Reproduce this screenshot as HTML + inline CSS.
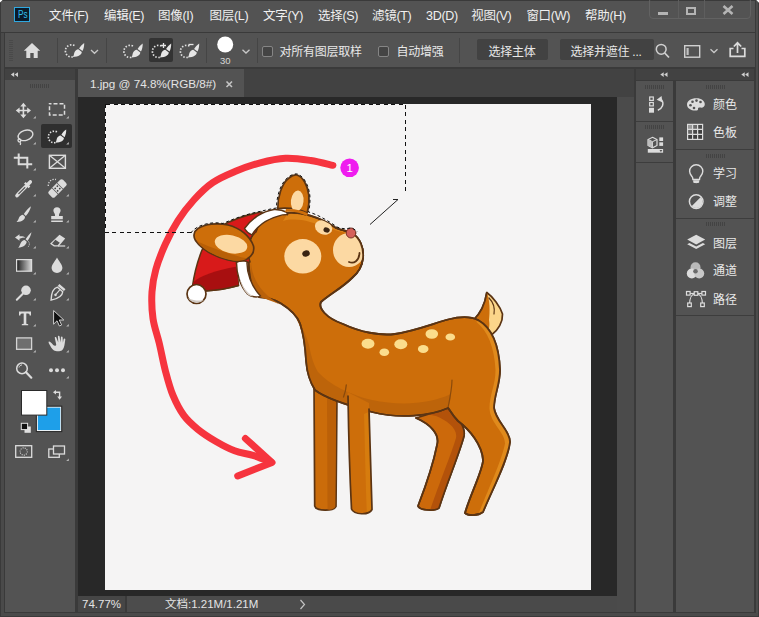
<!DOCTYPE html>
<html><head><meta charset="utf-8">
<style>
html,body{margin:0;padding:0;}
body{width:759px;height:617px;overflow:hidden;background:#535353;position:relative;font-family:"Liberation Sans","Noto Sans CJK SC",sans-serif;color:#e6e6e6;}
.abs{position:absolute;}
.menu{position:absolute;top:1px;height:31px;line-height:31px;font-size:12.5px;color:#f0f0f0;white-space:nowrap;letter-spacing:-0.3px;}
.ob{top:42.600px;font-size:12px;line-height:18px;letter-spacing:-0.25px;color:#f0f0f0;}
.grip{width:19px;height:4px;background:repeating-linear-gradient(90deg,#434343 0 1px,#535353 1px 2px);}
.pl{left:713px;font-size:12px;line-height:18px;color:#f0f0f0;}
.txt{position:absolute;white-space:nowrap;color:#e8e8e8;}
</style></head><body>
<!-- frame -->
<div class="abs" style="left:0;top:0;width:759px;height:617px;background:#3a3a3a;"></div>
<div class="abs" style="left:1px;top:1px;width:754px;height:30.700px;background:#535353;"></div>
<div class="abs" style="left:1px;top:33px;width:3px;height:583px;background:#4a4a4a;"></div>
<div class="abs" style="left:5px;top:33px;width:750px;height:34px;background:#535353;"></div>
<!-- TITLE BAR -->
<div class="abs" style="left:14px;top:7px;width:16px;height:15px;background:#0a1b2a;border:1px solid #2fa8e0;box-sizing:border-box;"></div>
<div class="txt" style="left:16px;top:7.500px;font-size:10.300px;line-height:14px;color:#31c0f0;letter-spacing:0;transform:scaleX(0.800);transform-origin:0 0;left:17.500px">Ps</div>
<div class="menu" id="m1" style="left:49px;">文件(F)</div>
<div class="menu" id="m2" style="left:104px;">编辑(E)</div>
<div class="menu" id="m3" style="left:158px;">图像(I)</div>
<div class="menu" id="m4" style="left:209.500px;">图层(L)</div>
<div class="menu" id="m5" style="left:263px;">文字(Y)</div>
<div class="menu" id="m6" style="left:318px;">选择(S)</div>
<div class="menu" id="m7" style="left:372px;">滤镜(T)</div>
<div class="menu" id="m8" style="left:426px;">3D(D)</div>
<div class="menu" id="m9" style="left:471.300px;">视图(V)</div>
<div class="menu" id="m10" style="left:526.400px;">窗口(W)</div>
<div class="menu" id="m11" style="left:585px;">帮助(H)</div>
<!-- window controls -->
<div class="abs" style="left:649px;top:-3px;width:102px;height:22px;border:1px solid #626262;border-radius:4px;box-sizing:border-box;"></div>
<div class="abs" style="left:678px;top:0;width:1px;height:18px;background:#5e5e5e;"></div>
<div class="abs" style="left:704px;top:0;width:1px;height:18px;background:#5e5e5e;"></div>
<div class="abs" style="left:658px;top:11.500px;width:10px;height:3px;background:#b4b4b4;"></div>
<div class="abs" style="left:686px;top:7px;width:10px;height:8px;border:2px solid #b4b4b4;box-sizing:border-box;"></div>
<svg class="abs" style="left:721px;top:4px" width="14" height="12" viewBox="0 0 14 12"><path d="M2.500,2 L11.500,10 M11.500,2 L2.500,10" stroke="#b4b4b4" stroke-width="2.600" fill="none"/></svg>
<!-- OPTIONS BAR -->
<div class="abs" style="left:9px;top:40px;width:4px;height:21px;background:repeating-linear-gradient(#494949 0 1px,#535353 1px 2px);"></div>
<svg class="abs" style="left:23px;top:42px" width="18" height="17" viewBox="0 0 18 17"><path d="M9,1 L0.800,8.800 H3.300 V16 H7.300 V11 H10.700 V16 H14.700 V8.800 H17.200 Z" fill="#dcdcdc"/></svg>
<div class="abs" style="left:57px;top:38px;width:1px;height:25px;background:#454545;"></div>
<div class="abs" style="left:106px;top:38px;width:1px;height:25px;background:#454545;"></div>
<div class="abs" style="left:206px;top:38px;width:1px;height:25px;background:#454545;"></div>
<div class="abs" style="left:257px;top:38px;width:1px;height:25px;background:#454545;"></div>
<div class="abs" style="left:459px;top:38px;width:1px;height:25px;background:#454545;"></div>
<div class="abs" style="left:149px;top:38px;width:24px;height:24px;background:#333333;border-radius:2px;"></div>
<svg class="abs" style="left:0;top:0" width="759" height="70" viewBox="0 0 759 70">
<defs>
<g id="qsel">
<path d="M8.27,14.37 A6.1,6.1 0 1 1 10.92,3.73" fill="none" stroke="#e2e2e2" stroke-width="1.700" stroke-dasharray="1.500 1.600"/>
<path d="M19.700,0.600 C17.600,2 15.800,4 14.600,6 L18,8.600 C19.200,6.300 19.800,3.300 19.700,0.600 Z M13.800,6.800 L17.300,9.500 C17.300,11.800 14.500,14.400 8.200,14.500 C9.500,13.200 9.300,11.700 9.900,10 C10.600,8.200 12.200,7 13.800,6.800 Z" fill="#e6e6e6"/>
</g>
<path id="chev" d="M0.500,0.700 L4,4 L7.500,0.700" fill="none" stroke="#c8c8c8" stroke-width="1.300"/>
</defs>
<use href="#qsel" x="64.500" y="42.500"/>
<use href="#chev" x="90.500" y="49.300"/>
<use href="#qsel" x="123" y="43"/>
<use href="#qsel" x="151.500" y="43"/>
<path d="M163.500,43 V48 M161,45.500 H166" stroke="#e6e6e6" stroke-width="1.300" fill="none"/>
<use href="#qsel" x="179.500" y="43"/>
<path d="M188.500,44.500 H193.500" stroke="#e6e6e6" stroke-width="1.300" fill="none"/>
<circle cx="225.200" cy="44.500" r="8" fill="#ffffff"/>
<use href="#chev" x="242" y="49"/>
<!-- search -->
<circle cx="661.200" cy="49.300" r="4.900" fill="none" stroke="#d0d0d0" stroke-width="1.500"/>
<path d="M664.700,53 L669,57.500" stroke="#d0d0d0" stroke-width="1.800" fill="none"/>
<!-- workspace -->
<rect x="684.700" y="45.700" width="15" height="11.500" fill="none" stroke="#d0d0d0" stroke-width="1.400"/>
<rect x="686.500" y="48" width="2.200" height="7" fill="#c0c0c0"/>
<use href="#chev" x="710" y="48.500"/>
<!-- share -->
<path d="M733.500,48.500 H730.200 V56.300 H744.800 V48.500 H741.500" fill="none" stroke="#dcdcdc" stroke-width="1.700"/>
<path d="M737.500,53 V44 M733.800,46.500 L737.500,42.800 L741.200,46.500" fill="none" stroke="#dcdcdc" stroke-width="1.700"/>
</svg>
<div class="txt" style="left:220px;top:56px;font-size:9.500px;line-height:10px;color:#d8d8d8;">30</div>
<div class="abs" style="left:262px;top:46px;width:11px;height:11px;border:1px solid #858585;border-radius:2px;box-sizing:border-box;background:#444444;"></div>
<div class="txt ob" id="o1" style="left:279.500px;">对所有图层取样</div>
<div class="abs" style="left:378px;top:46px;width:11px;height:11px;border:1px solid #858585;border-radius:2px;box-sizing:border-box;background:#444444;"></div>
<div class="txt ob" id="o2" style="left:396.500px;">自动增强</div>
<div class="abs" style="left:477px;top:38.500px;width:71px;height:21.500px;background:#424242;border-radius:2px;"></div>
<div class="txt ob" id="o3" style="left:488.500px;">选择主体</div>
<div class="abs" style="left:560px;top:38.500px;width:94px;height:21.500px;background:#424242;border-radius:2px;"></div>
<div class="txt ob" id="o4" style="left:570.500px;">选择并遮住 ...</div>
<!-- left toolbar -->
<div class="abs" style="left:5px;top:69px;width:70px;height:11px;background:#424242;"></div>
<div class="abs" style="left:5px;top:80px;width:70px;height:532px;background:#535353;"></div>
<!-- TOOLBAR ICONS -->
<div class="abs" style="left:30px;top:84px;width:19px;height:4px;background:repeating-linear-gradient(90deg,#434343 0 1px,#535353 1px 2px);"></div>
<div class="abs" style="left:41px;top:124px;width:31px;height:24px;background:#2f2f2f;border-radius:2px;"></div>
<svg class="abs" style="left:0;top:0" width="80" height="617" viewBox="0 0 80 617">
<defs><path id="tri" d="M2.600,0 V2.600 H0 Z" fill="#b8b8b8"/></defs>
<g fill="#dcdcdc" stroke="none">
<path d="M14.200,72.300 L10.800,74.600 L14.200,76.900 Z M18,72.300 L14.600,74.600 L18,76.900 Z" fill="#cfcfcf"/>
<!-- move -->
<path d="M23.400,102.800 L20.300,106.600 H22.600 V109.700 H19.600 V107.400 L15.800,110.500 L19.600,113.600 V111.300 H22.600 V114.400 H20.300 L23.400,118.200 L26.500,114.400 H24.200 V111.300 H27.200 V113.600 L31,110.500 L27.200,107.400 V109.700 H24.200 V106.600 H26.500 Z"/>
<use href="#tri" x="33.200" y="116"/>
<use href="#tri" x="66.200" y="116"/>
<use href="#tri" x="33.200" y="142"/>
<use href="#tri" x="66.200" y="142"/>
<use href="#tri" x="33.200" y="168"/>
<use href="#tri" x="33.200" y="194"/>
<use href="#tri" x="66.200" y="194"/>
<use href="#tri" x="33.200" y="220"/>
<use href="#tri" x="66.200" y="220"/>
<use href="#tri" x="33.200" y="246"/>
<use href="#tri" x="66.200" y="246"/>
<use href="#tri" x="33.200" y="272"/>
<use href="#tri" x="66.200" y="272"/>
<use href="#tri" x="33.200" y="298"/>
<use href="#tri" x="66.200" y="298"/>
<use href="#tri" x="33.200" y="324"/>
<use href="#tri" x="66.200" y="324"/>
<use href="#tri" x="33.200" y="350"/>
<use href="#tri" x="66.200" y="350"/>
<use href="#tri" x="66.200" y="376"/>
<use href="#tri" x="66.200" y="458.500"/>
</g>
<g fill="none" stroke="#dcdcdc" stroke-width="1.500">
<!-- marquee -->
<rect x="49.500" y="103.800" width="15" height="11.200" stroke-dasharray="4 2" stroke-dashoffset="2"/>
<!-- lasso -->
<ellipse cx="25.500" cy="135.300" rx="7.600" ry="5" transform="rotate(-18 25.500 135.300)" stroke-width="1.400"/>
<path d="M19.300,138.500 C17.500,139 17.500,142 19.800,141.800 C21.300,141.500 21.300,139.300 19.300,138.500 M20,142 C20.800,143 20.800,144 20.200,145" stroke-width="1.300"/>
<!-- crop -->
<path d="M18.700,153.500 V164.200 H32.200 M13.800,157.700 H27.300 V168.400" stroke-width="2"/>
<!-- frame -->
<rect x="49.400" y="155.300" width="16" height="13" stroke-width="1.400"/>
<path d="M49.400,155.300 L65.400,168.300 M65.400,155.300 L49.400,168.300" stroke-width="1.300"/>
</g>
<!-- quick select (selected) -->
<g transform="translate(47.500,129) scale(0.95)"><use href="#qsel"/></g>
<!-- eyedropper -->
<path d="M29.500,180.300 C31.200,179.500 32.800,181.500 31.700,183 L29.300,185.500 L30.300,186.500 L28.600,188.200 L24,183.600 L25.700,181.900 L26.700,182.900 Z" fill="#dcdcdc"/>
<path d="M25.800,186.600 L18.600,193.800 L17,195.600" fill="none" stroke="#dcdcdc" stroke-width="3.600" stroke-linecap="round"/>
<path d="M24.800,187.600 L18.800,193.600" fill="none" stroke="#535353" stroke-width="1.300" stroke-linecap="round"/>
<!-- healing -->
<g transform="rotate(-45 57.500 188.500)">
<rect x="47.500" y="184.300" width="20" height="8.400" rx="2" fill="#dcdcdc"/>
<rect x="53.700" y="184.300" width="7.600" height="8.400" fill="#535353"/>
<rect x="54.400" y="184.300" width="6.200" height="8.400" fill="#dcdcdc"/>
<g fill="#444"><circle cx="56" cy="186.800" r="0.900"/><circle cx="59" cy="186.800" r="0.900"/><circle cx="56" cy="190.200" r="0.900"/><circle cx="59" cy="190.200" r="0.900"/></g>
</g>
<path d="M48.300,186 C48,181.500 52,178.500 56,179.500" fill="none" stroke="#dcdcdc" stroke-width="1.300" stroke-dasharray="1.300 1.400"/>
<!-- brush -->
<path d="M31,206.300 C28.500,208 25.500,211.500 23.800,214 L25.800,216 C28,213.800 30.500,209.500 31,206.300 Z M23,214.800 L25,216.800 C25,219.500 22,222.200 16.500,222 C18,221 18.300,219.500 19,217.800 C19.800,216 21.300,215 23,214.800 Z" fill="#dcdcdc"/>
<!-- stamp -->
<path d="M57,207.300 C59.300,207.300 60.600,209 60.600,210.600 C60.600,212.300 59.200,213.300 59,214.800 L59,216 H62.800 V219.300 H51.200 V216 H55 L55,214.800 C54.800,213.300 53.400,212.300 53.400,210.600 C53.400,209 54.700,207.300 57,207.300 Z M51.200,220.600 H62.800 V222 H51.200 Z" fill="#dcdcdc"/>
<!-- history brush -->
<path d="M31.500,232.300 C29.500,234 27,237 25.600,239.200 L27.500,241 C29.300,238.800 31,235.300 31.500,232.300 Z M24.800,240 L26.700,241.800 C26.500,244.500 23.500,247.500 18,247.800 C19.500,246.600 19.800,245 20.600,243.200 C21.400,241.300 23,240.200 24.800,240 Z" fill="#dcdcdc"/>
<path d="M15,237.500 L19.500,234.300 V236.300 C22,236 24,236.500 25.500,237.500 C23.500,237.500 21.500,238 19.500,238.700 V240.700 Z" fill="#dcdcdc"/>
<path d="M28.500,241.500 C30,243.500 29.500,246 27.500,247.500" fill="none" stroke="#dcdcdc" stroke-width="1" stroke-dasharray="1 1.200"/>
<!-- eraser -->
<path d="M59.500,234.800 L65.200,238.600 L58.500,246.500 H54 L50,243.800 Z M52,243.500 L54.600,245.300 H57.700 L59.800,242.800 L55.400,239.800 Z" fill="#dcdcdc" fill-rule="evenodd"/>
<path d="M58,246 H65.200" stroke="#dcdcdc" stroke-width="1.200"/>
<!-- gradient -->
<defs><linearGradient id="gr" x1="0" x2="1" y1="0" y2="0"><stop offset="0" stop-color="#1c1c1c"/><stop offset="1" stop-color="#d8d8d8"/></linearGradient></defs>
<rect x="16.600" y="259.600" width="15" height="11.600" fill="url(#gr)" stroke="#dcdcdc" stroke-width="1.200"/>
<!-- drop -->
<path d="M57,257.400 C58.500,260.500 62.400,264.500 62.400,267.800 C62.400,270.800 60,272.900 57,272.900 C54,272.900 51.600,270.800 51.600,267.800 C51.600,264.500 55.500,260.500 57,257.400 Z" fill="#dcdcdc"/>
<!-- dodge -->
<circle cx="26" cy="290.300" r="4.800" fill="#dcdcdc"/>
<path d="M22.800,293.800 L16.800,299.800" stroke="#dcdcdc" stroke-width="2" stroke-linecap="round"/>
<!-- pen -->
<g transform="rotate(40 57.500 292.500)">
<path d="M53.500,284.800 H61.500 V287.300 H53.500 Z" fill="#dcdcdc"/>
<path d="M54,288.500 H61 C63.500,292 62.500,296 57.500,302.500 C52.500,296 51.500,292 54,288.500 Z" fill="none" stroke="#dcdcdc" stroke-width="1.400"/>
<path d="M57.500,289 V295" stroke="#dcdcdc" stroke-width="1.100"/><circle cx="57.500" cy="295.600" r="1.300" fill="#dcdcdc"/>
</g>
<!-- T -->
<path d="M19,311.600 H31 V315.400 H29.700 C29.600,314.300 29.200,313.500 28,313.500 H26.300 V323.300 C26.300,323.900 26.800,324.200 28.200,324.200 V325.300 H21.800 V324.200 C23.200,324.200 23.700,323.900 23.700,323.300 V313.500 H22 C20.800,313.500 20.400,314.300 20.300,315.400 H19 Z" fill="#dcdcdc"/>
<!-- path select -->
<path d="M53.600,310.500 V324.200 L57,320.800 L59.400,326 L61.600,325 L59.300,320 H63.800 Z" fill="#111" stroke="#cfcfcf" stroke-width="1"/>
<!-- rect -->
<rect x="16.600" y="337.900" width="15" height="11.400" fill="#6e6e6e" stroke="#d4d4d4" stroke-width="1.300"/>
<!-- hand -->
<path d="M53.200,345 C51.600,343.200 50,341.600 49,341.600 C48.300,341.900 48.600,343 49.200,344 C50.500,346.500 52,349 54,350.500 C55.500,351.500 60,351.700 61.800,350.600 C63.500,349.200 64.500,346 64.800,343 L65.300,339.200 C65.300,338.200 63.800,338.200 63.600,339.200 L62.900,342.800 L62.600,337.200 C62.500,336.200 61,336.200 60.900,337.200 L60.600,342.400 L59.500,336.300 C59.300,335.300 57.800,335.500 57.900,336.500 L58.300,342.600 L56.300,337.600 C55.900,336.700 54.500,337.100 54.800,338.100 L56.200,344.500 C56.300,346 54.500,346.300 53.200,345 Z" fill="#dcdcdc"/>
<!-- zoom -->
<circle cx="22" cy="368.400" r="5.300" fill="none" stroke="#dcdcdc" stroke-width="1.500"/>
<path d="M19,367.500 C19.300,366 20.500,365 22,364.900" fill="none" stroke="#dcdcdc" stroke-width="1"/>
<path d="M26,372.300 L31.300,377.700" stroke="#dcdcdc" stroke-width="2.200" stroke-linecap="round"/>
<!-- dots -->
<g fill="#dcdcdc"><circle cx="51" cy="370.200" r="2"/><circle cx="57" cy="370.200" r="2"/><circle cx="63" cy="370.200" r="2"/></g>
<!-- swatches -->
<rect x="37.300" y="407.100" width="23.500" height="23.500" fill="#1e9fe9" stroke="#ffffff" stroke-width="1"/>
<rect x="36.300" y="406.100" width="25.500" height="25.500" fill="none" stroke="#2a2a2a" stroke-width="1"/>
<rect x="21.500" y="390.500" width="25.300" height="24.600" fill="#ffffff" stroke="#2a2a2a" stroke-width="1"/>
<!-- swap -->
<path d="M53,392.300 L56,390 V391.600 H60.300 V396.500 H62 L59.600,399.700 L57.200,396.500 H58.900 V393 H56 V394.600 Z" fill="#dcdcdc"/>
<!-- default -->
<rect x="24.500" y="426.500" width="6.300" height="6.300" fill="#e0e0e0"/>
<rect x="21.300" y="423.300" width="6.300" height="6.300" fill="#111" stroke="#e0e0e0" stroke-width="1"/>
<!-- quick mask -->
<rect x="15.700" y="445.700" width="16" height="11.600" fill="none" stroke="#dcdcdc" stroke-width="1.300"/>
<circle cx="23.700" cy="451.500" r="3.600" fill="none" stroke="#dcdcdc" stroke-width="1.100" stroke-dasharray="1 1.200"/>
<!-- screen mode -->
<rect x="48.800" y="449" width="10.500" height="8.300" fill="none" stroke="#dcdcdc" stroke-width="1.300"/>
<rect x="53.500" y="446" width="11" height="8" fill="#535353" stroke="#dcdcdc" stroke-width="1.300"/>
</svg>
<!-- document area -->
<div class="abs" style="left:78px;top:69px;width:556px;height:28px;background:#424242;"></div>
<div class="abs" style="left:78px;top:69px;width:166px;height:28px;background:#535353;"></div>
<div class="abs" style="left:78px;top:97px;width:556px;height:499px;background:#282828;"></div>
<div class="abs" style="left:616.600px;top:97px;width:17.400px;height:515px;background:#4b4b4b;"></div>

<!-- canvas -->
<div class="abs" id="canvas" style="left:105px;top:103.600px;width:486px;height:486.200px;background:#f5f4f4;"></div>
<svg class="abs" style="left:0;top:0" width="759" height="617" viewBox="0 0 759 617">
<g stroke-linejoin="round" stroke-linecap="round">
<!-- tail -->
<path d="M473.500,320 C480,314 485,304 486.800,292.500 C493,297 500,306 502.500,314 C503,322 498,330 492,334.500 Z" fill="#fbd58a" stroke="#5b3413" stroke-width="1.700"/>
<path d="M473.500,320 C480,314 485,304 486.800,292.500 C490,300 490,312 489,320 C490,326 489,330 487,331 Z" fill="#cd6e0a"/>
<path d="M473.500,320 C480,314 485,304 486.800,292.500" fill="none" stroke="#5b3413" stroke-width="1.700"/>
<path d="M489,298 C493,302 495,308 494,314" fill="none" stroke="#5b3413" stroke-width="1.200"/>
<!-- far back leg -->
<path d="M416,418 C430,424 440,434 437,445 C432,470 423,493 418,506 C420,511 436,511 439,508 C448,480 460,452 464,436 C466,426 456,415 449,408 Z" fill="#cc690b" stroke="#5b3413" stroke-width="1.700"/>
<path d="M449,408 C456,415 466,426 464,436 C460,452 448,480 439,508 C437,510 433,510.500 430,510.500 C439,484 452,452 456,438 C458,428 446,420 436,416 C428,414 420,414 416,418 C425,412 440,408 449,408 Z" fill="#b3520a"/>
<path d="M416,418 C430,424 440,434 437,445 C432,470 423,493 418,506 C420,511 436,511 439,508 C448,480 460,452 464,436 C466,426 456,415 449,408" fill="none" stroke="#5b3413" stroke-width="1.700"/>
<!-- far front leg -->
<path d="M314,383 L314.700,506 C316,511.500 334,511.500 336,506.500 L337,393 Z" fill="#cb6c0a" stroke="#5b3413" stroke-width="1.700"/>
<path d="M327,396 L327.500,509.500 C331,510 334.500,509 335.200,506.500 L336.200,396 Z" fill="#bb6008"/>
<!-- body silhouette -->
<defs><path id="body" d="M285,213 C300,211 320,217 336,228 C343,231 348,231 352,233 C360,238 364,248 363,258 C362,268 357,274 352,278 C342,288 330,294 321,302 C318,308 326,318 343,324 C360,332 380,336 395,334 C415,331 432,324 448,319.500 C458,317 470,316 478,320 C492,328 499,345 500,370 C500,385 494,395 494,408 C496,422 510,430 510,442 C508,460 492,490 483,512 C478,516 468,516 465,513 C470,495 483,470 483,460 C482,445 470,430 458,421 C452,415 450,410 448,408 C430,416 400,419 372,412 C350,406 325,398 315,390 C310,382 307,372 306.200,362 C305.500,350 304,335 300,323.500 C297,316 290,309 281,303.500 C272,298.500 264,297 259,297 C250,285 246,265 250,240 C255,225 270,215 285,213 Z"/></defs>
<use href="#body" fill="#cd6e0a" stroke="#5b3413" stroke-width="1.800"/>
<!-- light right rim -->
<path d="M480,321 C492,328 499,345 500,370 C500,385 494,395 494,408 C496,422 510,430 510,442 C508,460 492,490 483,512 C482,513.500 480,514.500 478,515 C488,490 502,460 505,443.500 C505,432 490.500,424 489.500,408.500 C489.500,395 495.500,385 495.500,370 C494.500,348 488,331 476,321.500 Z" fill="#e08a1c"/>
<!-- head top highlight -->
<path d="M287,214.500 C300,212.500 320,218 336,229 C343,232 347,232 350,233.500 C340,233 325,226 310,222 C300,219 290,219 283,221 Z" fill="#dd8418"/>
<!-- belly shade -->
<path d="M316,389 C325,397 350,405 372,411 C400,418 430,415 448,407 C450,403 451,398 451,394 C430,404 400,406 372,400 C350,395 330,385 318,372 C314,366 311,356 309,345 C305,332 300,322 296,318 C303,330 305,345 306,362 C307,372 310,382 316,389 Z" fill="#bd640a"/>
<path d="M343.500,397 C345,393 346,389 346.300,385" fill="none" stroke="#8a4a0c" stroke-width="1.300"/>
<path d="M448,408 C450,398 452,388 452,380" fill="none" stroke="#8a4a0c" stroke-width="1.200"/>
<!-- re-stroke body outline -->
<use href="#body" fill="none" stroke="#5b3413" stroke-width="1.800"/>
<!-- near front leg -->
<path d="M347.500,392 C348.500,430 350,480 351.500,509 C354,515 369,515.500 372,509.500 C371,470 369.500,430 369,403 Z" fill="#cd6e0a"/>
<path d="M364,414 C364.800,440 365.500,480 366.800,512.300 C369,512 371,511 371.500,509.500 C370.500,470 369.300,430 368.600,412 Z" fill="#d67c0e"/>
<path d="M348,396 C348.500,430 350,480 351.500,509 C354,515 369,515.500 372,509.500 C371,470 369.500,430 369,409" fill="none" stroke="#5b3413" stroke-width="1.700"/>
<!-- spots -->
<g fill="#fbdd8c">
<ellipse cx="368" cy="343.700" rx="6.500" ry="5"/><ellipse cx="384.300" cy="352.200" rx="4.800" ry="3.800"/><ellipse cx="400.800" cy="344.300" rx="6.500" ry="5"/><ellipse cx="423.200" cy="349" rx="5.300" ry="4"/><ellipse cx="431.800" cy="334" rx="6.300" ry="4.800"/><ellipse cx="450.300" cy="337" rx="4.800" ry="3.600"/>
</g>
</g>
<!-- ARROW -->
<g fill="none" stroke="#f6343e" stroke-width="7" stroke-linecap="round" stroke-linejoin="round">
<path d="M332.9,165.3 C329.2,164.5 318.6,161.7 310.7,160.5 C302.8,159.3 293.9,157.9 285.5,158.3 C277.1,158.7 268.6,160.6 260.2,162.8 C251.8,165.0 242.8,168.3 234.9,171.6 C227.0,174.9 219.5,178.0 212.7,182.7 C205.8,187.4 199.6,193.7 193.8,200.0 C188.0,206.3 182.8,213.2 178.0,220.6 C173.2,228.0 169.0,236.1 165.3,244.3 C161.6,252.5 158.0,261.7 155.8,269.6 C153.6,277.5 152.5,283.7 152.0,291.8 C151.5,299.9 151.8,310.0 153.0,318.5 C154.2,327.0 157.1,334.3 159.2,343.0 C161.3,351.7 163.1,362.1 165.4,370.8 C167.7,379.5 169.9,388.0 173.0,395.4 C176.1,402.8 179.7,409.8 183.8,415.4 C187.9,421.0 192.3,424.8 197.7,429.2 C203.1,433.6 209.8,437.9 216.0,441.5 C222.2,445.1 228.4,448.5 234.6,450.8 C240.8,453.1 246.9,453.5 253.0,455.4 C259.1,457.3 268.0,460.9 271.0,462.0"/>
<path d="M245.400,438.500 L272,462.500 L237.700,476"/>
</g>
<circle cx="349.600" cy="167.800" r="9.300" fill="#ef1cef"/>
<text x="349.600" y="172" font-size="11.500" fill="#ffffff" text-anchor="middle" font-family="Liberation Sans, sans-serif">1</text>
<!-- HEAD FEATURES -->
<g stroke-linejoin="round" stroke-linecap="round">
<path d="M251,262 C252,280 262,294 280,304.500 C272,301 264,298.500 259.500,297 C252,288 249,275 251,262 Z" fill="#b9610a"/>
<!-- hat red -->
<path d="M262,212 C250,214 235,218.500 221,226 L202,250 C198,260 194.500,272 192.500,286 L205,291 C215,290.500 228,288.500 238.500,285.500 L236.500,262.500 L250,262 C246,250 248,238 256,232 L262,216 Z" fill="#d81a1a" stroke="#5b3413" stroke-width="1.500"/>
<path d="M193.500,282 C200,276 215,270.500 237,266.500 L238.500,285.500 C228,288.500 215,290.500 205,291 L192.500,286 Z" fill="#a80f10"/>
<path d="M205,291 C215,290.500 228,288.500 238.500,285.500" fill="none" stroke="#5b3413" stroke-width="1.500"/>
<!-- brim top band -->
<path d="M244.500,228.500 C248,223.500 252.500,219.500 257.200,216.100 C262,213 268,210.500 274,209.500 C279,209.300 283.500,210.500 286.700,212.400 L287.700,214.700 C284,214.500 281,215.200 278.200,216.100 C272,218 266.500,220.500 262.400,223.500 C258,226.800 254.500,230.500 251.900,234.800 C248.500,233.500 246,231 244.500,228.500 Z" fill="#ffffff" stroke="#5b3413" stroke-width="1.400"/>
<!-- brim lower band -->
<path d="M236.500,262.500 C239,261 243,260.500 247,261.500 C246.500,272 251,286 260.500,296 C257,297.800 251,297 247.500,294 C240,286 236.500,273 236.500,262.500 Z" fill="#ffffff" stroke="#5b3413" stroke-width="1.400"/>
<path d="M239,276 C241.500,285 246,292 253,296.300 C250.500,296.500 248.500,295.500 247,293.800 C243,289.500 240.500,283 239,276 Z" fill="#d9d0c8"/>
<!-- pompom -->
<circle cx="196.500" cy="294" r="9.500" fill="#ffffff" stroke="#5b3413" stroke-width="1.700"/>
<path d="M188,298 C191,303 199,304.500 204,300 C200,301 194,301 188,298 Z" fill="#cfc8c2"/>
<!-- upright ear -->
<path d="M277.800,208.500 C277.500,197 282,183 289,178 C292,175.500 295,174.500 297,175 C303,177 307.500,185 308.800,195 C309.500,202 308.500,208 307.200,213 C300,209.500 288,207.500 277.800,208.500 Z" fill="#cd6e0a" stroke="#5b3413" stroke-width="1.700"/>
<ellipse cx="297.200" cy="201" rx="6.300" ry="10.500" transform="rotate(6 297.200 201)" fill="#fcd9a3"/>
<path d="M286,209 C294,208.500 302,210 308,213.500 L307,216 C300,212 292,211 285,212 Z" fill="#cd6e0a"/>
<!-- left ear -->
<path d="M253.500,246 C250,236 240,228 228,225 C217,222.500 205,224 198,228.500 C193.500,231.500 193,237 195.500,240.500 C202,250 215,256.500 228,260 C236,262 243,261.500 247,259 C252,256 254.500,251 253.500,246 Z" fill="#cd6e0a" stroke="#5b3413" stroke-width="1.700"/>
<ellipse cx="231" cy="244.200" rx="16.500" ry="9" transform="rotate(12 231 244.200)" fill="#fcd9a3"/>
<path d="M196.500,241 C203,250 216,256.500 228,259.500 C236,261.500 243,261 247,258.500 C240,257 218,251 196.500,241 Z" fill="#b85f06"/>
<!-- eye patch -->
<ellipse cx="302.800" cy="256.300" rx="18.500" ry="17.200" fill="#fcd9a3"/>
<ellipse cx="306" cy="253.500" rx="3.800" ry="3.200" transform="rotate(-15 306 253.500)" fill="#3a2412"/>
<!-- muzzle patch -->
<clipPath id="hc"><use href="#body"/></clipPath>
<g clip-path="url(#hc)"><ellipse cx="349" cy="250" rx="16" ry="17" fill="#fcd9a3"/>
<ellipse cx="323.500" cy="227.500" rx="9" ry="6.800" transform="rotate(25 323.500 227.500)" fill="#fcd9a3"/></g>
<ellipse cx="326.600" cy="230" rx="3.200" ry="2.600" transform="rotate(25 326.600 230)" fill="#3a2412"/>
<path d="M336,228 C343,231 348,231 352,233 C360,238 364,248 363,258 C362,268 357,274 352,278" fill="none" stroke="#5b3413" stroke-width="1.800"/>
<!-- nose -->
<ellipse cx="351" cy="233" rx="4.800" ry="5" fill="#d5605a" stroke="#7a3326" stroke-width="1"/>
<!-- smile -->
<path d="M349,262 C354,264 359,261 359.500,253" fill="none" stroke="#5b3413" stroke-width="1.800"/>
</g>
<!-- ANTS -->
<g fill="none" stroke="#111" stroke-width="1" stroke-dasharray="4 3.500" shape-rendering="crispEdges">
<path d="M106,104 H405.500 V193"/>
<path d="M105.500,104 V232.500 H191"/>
</g>
<path d="M191,233 C193,229.500 198,226 206,224 C212,222.500 218,222.500 223,223.500 C235,218 249,213.500 262,211 C266,210 271,208.800 276.500,208 C276.500,196 281,182 288.500,177 C291.500,174.500 295,173.500 297.500,174 C304,176.500 308.500,185 309.800,195 C310.300,201 309.800,207 308.500,212 C318,214.500 330,222 337,227 C343,229.500 347,228.500 351,228 C354,228.500 356,230.500 357.500,232" fill="none" stroke="#111" stroke-width="1" stroke-dasharray="3 2.500"/>
<path d="M393,199.500 H398 L370,224.500" fill="none" stroke="#222" stroke-width="1"/>
</svg>
<!-- TAB + STATUS TEXT -->
<div class="txt" id="tabt" style="left:90px;top:75px;font-size:11.700px;line-height:18px;color:#e4e4e4;">1.jpg @ 74.8%(RGB/8#)</div>
<svg class="abs" style="left:225px;top:79.500px" width="9" height="9" viewBox="0 0 9 9"><path d="M1.500,1.500 L7,7 M7,1.500 L1.500,7" stroke="#c4c4c4" stroke-width="1.600" fill="none"/></svg>
<div class="abs" style="left:78px;top:596px;width:47px;height:16px;background:#464646;"></div>
<div class="abs" style="left:127px;top:596px;width:183px;height:16px;background:#4c4c4c;"></div>
<div class="abs" style="left:310px;top:596px;width:306.600px;height:16px;background:#4a4a4a;"></div>
<div class="txt" id="st1" style="left:82px;top:596px;font-size:11.500px;line-height:16px;color:#e4e4e4;">74.77%</div>
<div class="txt" id="st2" style="left:165px;top:596px;font-size:11.500px;line-height:16px;color:#e4e4e4;">文档:1.21M/1.21M</div>
<svg class="abs" style="left:299px;top:599px" width="7" height="11" viewBox="0 0 7 11"><path d="M1.500,1 L5.500,5.500 L1.500,10" stroke="#c4c4c4" stroke-width="1.200" fill="none"/></svg>
<!-- RIGHT PANELS -->
<div class="abs" style="left:636px;top:69px;width:118px;height:11px;background:#424242;"></div>
<div class="abs" style="left:636px;top:81px;width:37px;height:531px;background:#535353;"></div>
<div class="abs" style="left:676px;top:81px;width:78px;height:531px;background:#535353;"></div>
<div class="abs" style="left:636px;top:121px;width:37px;height:1px;background:#3d3d3d;"></div>
<div class="abs" style="left:636px;top:162px;width:37px;height:1px;background:#3d3d3d;"></div>
<div class="abs" style="left:676px;top:149px;width:78px;height:1px;background:#3d3d3d;"></div>
<div class="abs" style="left:676px;top:218px;width:78px;height:1px;background:#3d3d3d;"></div>
<div class="abs" style="left:676px;top:314.500px;width:78px;height:1px;background:#3d3d3d;"></div>
<div class="abs grip" style="left:645px;top:84.500px;"></div>
<div class="abs grip" style="left:645px;top:124.500px;"></div>
<div class="abs grip" style="left:705.500px;top:84.500px;"></div>
<div class="abs grip" style="left:705.500px;top:153.500px;"></div>
<div class="abs grip" style="left:705.500px;top:222px;"></div>
<div class="txt pl" style="top:96.0px;">颜色</div>
<div class="txt pl" style="top:123.5px;">色板</div>
<div class="txt pl" style="top:165.0px;">学习</div>
<div class="txt pl" style="top:193.0px;">调整</div>
<div class="txt pl" style="top:234.5px;">图层</div>
<div class="txt pl" style="top:262.0px;">通道</div>
<div class="txt pl" style="top:290.5px;">路径</div>
<svg class="abs" style="left:630px;top:60px" width="129" height="260" viewBox="630 60 129 260">
<g fill="#cfcfcf">
<path d="M663.700,72.300 L660.300,74.600 L663.700,76.900 Z M667.500,72.300 L664.100,74.600 L667.500,76.900 Z"/>
<path d="M744.700,72.300 L741.300,74.600 L744.700,76.900 Z M748.500,72.300 L745.100,74.600 L748.500,76.900 Z"/>
</g>
<!-- history -->
<g fill="none" stroke="#dcdcdc" stroke-width="1.200">
<rect x="649.700" y="97" width="3.600" height="3.400"/><rect x="649.700" y="102.500" width="3.600" height="3.400"/>
<path d="M657.800,110.200 C662.500,108.500 664.500,103.500 661.300,99.600" stroke-width="1.500"/>
</g>
<rect x="649" y="107.800" width="5" height="4.900" fill="#dcdcdc"/>
<path d="M656.600,99.800 L661.600,96 L662.300,102.300 Z" fill="#dcdcdc"/>
<!-- properties -->
<g fill="#dcdcdc">
<path d="M652.500,137.300 L657,139.500 V145.500 L652.500,147.800 L648,145.500 V139.500 Z" fill="none" stroke="#dcdcdc" stroke-width="1.200"/>
<path d="M648,139.500 L652.500,141.700 L657,139.500 M652.500,141.700 V147.800" fill="none" stroke="#dcdcdc" stroke-width="1"/>
<path d="M648,139.500 L652.500,141.700 V147.800 L648,145.500 Z" fill="#bdbdbd"/>
<rect x="659.300" y="137.400" width="3.800" height="3.600"/><rect x="659.300" y="142.300" width="3.800" height="3.600"/>
<rect x="647.800" y="149" width="15.300" height="3.700"/>
<path d="M659.500,150 H662.300 L660.900,152 Z" fill="#535353"/>
</g>
<!-- palette -->
<path d="M696.500,98.300 C701.500,98.300 704.800,101 704.800,104.300 C704.800,107 702.500,108 700.500,107.600 C698.800,107.200 697.800,107.800 698,109 C698.200,110.300 697.300,110.600 695.500,110.600 C690.500,110.600 687,108 687,104.500 C687,101 691,98.300 696.500,98.300 Z" fill="#dcdcdc"/>
<g fill="#535353"><circle cx="690.500" cy="105.300" r="1.300"/><circle cx="692.500" cy="101.800" r="1.300"/><circle cx="696.500" cy="100.600" r="1.300"/><circle cx="700.500" cy="102" r="1.300"/><circle cx="694" cy="108" r="1.300"/></g>
<!-- swatch grid -->
<rect x="687.600" y="124.400" width="15" height="15" fill="#3e3e3e"/>
<rect x="688.200" y="125" width="4.400" height="4.400" fill="#9a9a9a"/><rect x="692.600" y="125" width="5" height="4.400" fill="#6c6c6c"/><rect x="697.600" y="125" width="5" height="4.400" fill="#4c4c4c"/>
<rect x="688.200" y="129.400" width="4.400" height="5" fill="#666"/><rect x="692.600" y="129.400" width="5" height="5" fill="#484848"/>
<g fill="none" stroke="#dcdcdc" stroke-width="1.200">
<rect x="687.600" y="124.400" width="15" height="15"/>
<path d="M692.600,124.400 V139.400 M697.600,124.400 V139.400 M687.600,129.400 H702.600 M687.600,134.400 H702.600"/>
</g>
<!-- bulb -->
<path d="M696.200,164.800 C700,164.800 702.800,167.700 702.800,171.300 C702.800,174 701,175.500 699.800,177.500 L699.500,179.500 H692.900 L692.600,177.500 C691.400,175.500 689.600,174 689.600,171.300 C689.600,167.700 692.400,164.800 696.200,164.800 Z" fill="none" stroke="#dcdcdc" stroke-width="1.400"/>
<path d="M693.200,180.300 H699.200 V182.300 C698.500,183.500 693.900,183.500 693.200,182.300 Z" fill="#dcdcdc"/>
<!-- adjust -->
<circle cx="696.200" cy="201.600" r="6.800" fill="none" stroke="#dcdcdc" stroke-width="1.500"/>
<path d="M701,196.800 A6.800,6.800 0 0 1 691.400,206.400 Z" fill="#dcdcdc" transform="rotate(180 696.200 201.600)" opacity="0"/>
<path d="M700.600,197.200 L691.800,206 A6.200,6.200 0 0 0 700.600,197.200 Z" fill="#535353"/>
<path d="M691.600,206.200 L700.800,197 A6.500,6.500 0 0 0 691.600,206.200 Z" fill="#dcdcdc" transform="rotate(180 696.200 201.600)"/>
<!-- layers -->
<path d="M696.200,234.800 L705.200,239.600 L696.200,244.400 L687.200,239.600 Z" fill="#dcdcdc"/>
<path d="M689.500,243 L687.200,244.300 L696.200,249.100 L705.200,244.300 L702.900,243 L696.200,246.600 Z" fill="#dcdcdc"/>
<!-- channels -->
<circle cx="695.500" cy="267.300" r="5" fill="#b8b8b8"/>
<circle cx="691.800" cy="273.500" r="5" fill="#dcdcdc"/>
<circle cx="699.200" cy="273.500" r="5" fill="#c8c8c8"/>
<circle cx="695.500" cy="271.300" r="2.300" fill="#6a6a6a"/>
<!-- paths -->
<g fill="none" stroke="#dcdcdc" stroke-width="1.200">
<path d="M689.500,305 C689.500,298 692,293.500 696,293.500 C700,293.500 702.500,298 702.500,305"/>
<path d="M689,293.500 H703"/>
<rect x="686.500" y="291.500" width="3.600" height="3.600" fill="#535353"/><rect x="701.900" y="291.500" width="3.600" height="3.600" fill="#535353"/>
<rect x="694.200" y="291.700" width="3.600" height="3.600" fill="#535353"/>
<rect x="687.700" y="303" width="3.600" height="3.600" fill="#535353"/><rect x="700.700" y="303" width="3.600" height="3.600" fill="#535353"/>
</g>
</svg>
<div class="abs" style="left:755.500px;top:1px;width:2.500px;height:615px;background:#4c4c4c;"></div>
<div class="abs" style="left:1px;top:613px;width:757px;height:3px;background:#4a4a4a;"></div>
<svg class="abs" style="left:0;top:0" width="759" height="5" viewBox="0 0 759 5"><path d="M0,0 H2.600 L0,2.600 Z M759,0 H756.200 L759,2.800 Z" fill="#ffffff"/></svg>
</body></html>
